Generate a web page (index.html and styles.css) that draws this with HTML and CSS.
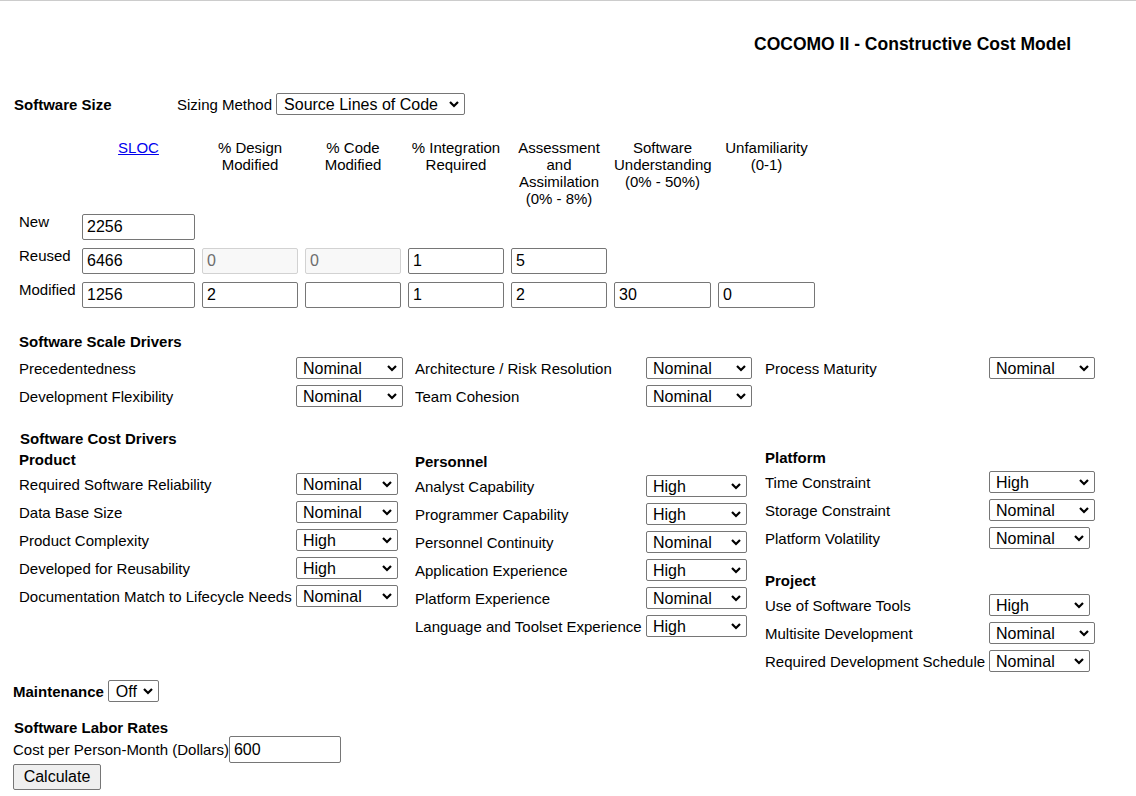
FILE: index.html
```html
<!DOCTYPE html>
<html>
<head>
<meta charset="utf-8">
<title>COCOMO II - Constructive Cost Model</title>
<link rel="stylesheet" href="styles.css">
</head>
<body>
<div class="page">
  <div class="title">COCOMO II - Constructive Cost Model</div>

  <div class="size-row">
    <span class="b size-label">Software Size</span>
    <span class="sizing">Sizing Method</span>
    <span class="sw"><select class="sel sel-method"><option>Source Lines of Code</option><option>Function Points</option></select><svg class="chev" viewBox="0 0 10 6"><path d="M1 1 L5 5 L9 1"/></svg></span>
  </div>

  <div class="size-grid">
    <div></div>
    <div class="hdr"><a href="#">SLOC</a></div>
    <div class="hdr">% Design<br>Modified</div>
    <div class="hdr">% Code<br>Modified</div>
    <div class="hdr">% Integration<br>Required</div>
    <div class="hdr">Assessment<br>and<br>Assimilation<br>(0% - 8%)</div>
    <div class="hdr">Software<br>Understanding<br>(0% - 50%)</div>
    <div class="hdr">Unfamiliarity<br>(0-1)</div>

    <div class="rowlabel">New</div>
    <input class="inp" type="text" value="2256">
    <div></div><div></div><div></div><div></div><div></div><div></div>

    <div class="rowlabel">Reused</div>
    <input class="inp" type="text" value="6466">
    <input class="inp" type="text" value="0" disabled>
    <input class="inp" type="text" value="0" disabled>
    <input class="inp" type="text" value="1">
    <input class="inp" type="text" value="5">
    <div></div><div></div>

    <div class="rowlabel">Modified</div>
    <input class="inp" type="text" value="1256">
    <input class="inp" type="text" value="2">
    <input class="inp" type="text" value="">
    <input class="inp" type="text" value="1">
    <input class="inp" type="text" value="2">
    <input class="inp" type="text" value="30">
    <input class="inp" type="text" value="0">
  </div>

  <div class="b section-head scale-head">Software Scale Drivers</div>
  <div class="drivers">
    <div class="col col1">
      <div class="drow"><span class="dl">Precedentedness</span><span class="sw"><select class="sel w107"><option>Nominal</option></select><svg class="chev" viewBox="0 0 10 6"><path d="M1 1 L5 5 L9 1"/></svg></span></div>
      <div class="drow"><span class="dl">Development Flexibility</span><span class="sw"><select class="sel w107"><option>Nominal</option></select><svg class="chev" viewBox="0 0 10 6"><path d="M1 1 L5 5 L9 1"/></svg></span></div>
    </div>
    <div class="col col2">
      <div class="drow"><span class="dl">Architecture / Risk Resolution</span><span class="sw"><select class="sel w106"><option>Nominal</option></select><svg class="chev" viewBox="0 0 10 6"><path d="M1 1 L5 5 L9 1"/></svg></span></div>
      <div class="drow"><span class="dl">Team Cohesion</span><span class="sw"><select class="sel w106"><option>Nominal</option></select><svg class="chev" viewBox="0 0 10 6"><path d="M1 1 L5 5 L9 1"/></svg></span></div>
    </div>
    <div class="col col3">
      <div class="drow"><span class="dl">Process Maturity</span><span class="sw"><select class="sel w106"><option>Nominal</option></select><svg class="chev" viewBox="0 0 10 6"><path d="M1 1 L5 5 L9 1"/></svg></span></div>
    </div>
  </div>

  <div class="b section-head cost-head">Software Cost Drivers</div>
  <div class="drivers">
    <div class="col col1">
      <div class="b grp grp-product">Product</div>
      <div class="drow"><span class="dl">Required Software Reliability</span><span class="sw"><select class="sel w102"><option>Nominal</option></select><svg class="chev" viewBox="0 0 10 6"><path d="M1 1 L5 5 L9 1"/></svg></span></div>
      <div class="drow"><span class="dl">Data Base Size</span><span class="sw"><select class="sel w102"><option>Nominal</option></select><svg class="chev" viewBox="0 0 10 6"><path d="M1 1 L5 5 L9 1"/></svg></span></div>
      <div class="drow"><span class="dl">Product Complexity</span><span class="sw"><select class="sel w102"><option>High</option></select><svg class="chev" viewBox="0 0 10 6"><path d="M1 1 L5 5 L9 1"/></svg></span></div>
      <div class="drow"><span class="dl">Developed for Reusability</span><span class="sw"><select class="sel w102"><option>High</option></select><svg class="chev" viewBox="0 0 10 6"><path d="M1 1 L5 5 L9 1"/></svg></span></div>
      <div class="drow"><span class="dl">Documentation Match to Lifecycle Needs</span><span class="sw"><select class="sel w102"><option>Nominal</option></select><svg class="chev" viewBox="0 0 10 6"><path d="M1 1 L5 5 L9 1"/></svg></span></div>
    </div>
    <div class="col col2">
      <div class="b grp grp-personnel">Personnel</div>
      <div class="drow"><span class="dl">Analyst Capability</span><span class="sw"><select class="sel w101"><option>High</option></select><svg class="chev" viewBox="0 0 10 6"><path d="M1 1 L5 5 L9 1"/></svg></span></div>
      <div class="drow"><span class="dl">Programmer Capability</span><span class="sw"><select class="sel w101"><option>High</option></select><svg class="chev" viewBox="0 0 10 6"><path d="M1 1 L5 5 L9 1"/></svg></span></div>
      <div class="drow"><span class="dl">Personnel Continuity</span><span class="sw"><select class="sel w101"><option>Nominal</option></select><svg class="chev" viewBox="0 0 10 6"><path d="M1 1 L5 5 L9 1"/></svg></span></div>
      <div class="drow"><span class="dl">Application Experience</span><span class="sw"><select class="sel w101"><option>High</option></select><svg class="chev" viewBox="0 0 10 6"><path d="M1 1 L5 5 L9 1"/></svg></span></div>
      <div class="drow"><span class="dl">Platform Experience</span><span class="sw"><select class="sel w101"><option>Nominal</option></select><svg class="chev" viewBox="0 0 10 6"><path d="M1 1 L5 5 L9 1"/></svg></span></div>
      <div class="drow"><span class="dl">Language and Toolset Experience</span><span class="sw"><select class="sel w101"><option>High</option></select><svg class="chev" viewBox="0 0 10 6"><path d="M1 1 L5 5 L9 1"/></svg></span></div>
    </div>
    <div class="col col3">
      <div class="b grp grp-platform">Platform</div>
      <div class="drow"><span class="dl">Time Constraint</span><span class="sw"><select class="sel w106"><option>High</option></select><svg class="chev" viewBox="0 0 10 6"><path d="M1 1 L5 5 L9 1"/></svg></span></div>
      <div class="drow"><span class="dl">Storage Constraint</span><span class="sw"><select class="sel w106"><option>Nominal</option></select><svg class="chev" viewBox="0 0 10 6"><path d="M1 1 L5 5 L9 1"/></svg></span></div>
      <div class="drow"><span class="dl">Platform Volatility</span><span class="sw"><select class="sel w101"><option>Nominal</option></select><svg class="chev" viewBox="0 0 10 6"><path d="M1 1 L5 5 L9 1"/></svg></span></div>
      <div class="b grp grp-project">Project</div>
      <div class="drow"><span class="dl">Use of Software Tools</span><span class="sw"><select class="sel w101"><option>High</option></select><svg class="chev" viewBox="0 0 10 6"><path d="M1 1 L5 5 L9 1"/></svg></span></div>
      <div class="drow"><span class="dl">Multisite Development</span><span class="sw"><select class="sel w106"><option>Nominal</option></select><svg class="chev" viewBox="0 0 10 6"><path d="M1 1 L5 5 L9 1"/></svg></span></div>
      <div class="drow"><span class="dl">Required Development Schedule</span><span class="sw"><select class="sel w101"><option>Nominal</option></select><svg class="chev" viewBox="0 0 10 6"><path d="M1 1 L5 5 L9 1"/></svg></span></div>
    </div>
  </div>

  <div class="maint-row">
    <span class="b">Maintenance</span>
    <span class="sw"><select class="sel w51"><option>Off</option><option>On</option></select><svg class="chev" viewBox="0 0 10 6"><path d="M1 1 L5 5 L9 1"/></svg></span>
  </div>

  <div class="b labor-head">Software Labor Rates</div>
  <div class="cost-row">
    <span>Cost per Person-Month (Dollars)</span><input class="inp inp-cost" type="text" value="600">
  </div>
  <button class="calc" type="button">Calculate</button>
</div>
</body>
</html>
```
FILE: styles.css
```css
html, body {
  margin: 0;
  padding: 0;
  background: #fff;
}
body {
  border-top: 1px solid #cccccc;
  font-family: "Liberation Sans", Arial, sans-serif;
  font-size: 15px;
  line-height: 17px;
  color: #000;
}
.page {
  padding-bottom: 10px;
}
.b {
  font-weight: bold;
}
.title {
  margin-top: 33px;
  height: 20px;
  line-height: 20px;
  font-size: 17.5px;
  font-weight: bold;
  text-align: right;
  padding-right: 65px;
}
.size-row {
  margin-top: 39px;
  display: flex;
  align-items: center;
  height: 22px;
  padding-left: 14px;
}
.size-label {
  width: 163px;
}
.sizing {
  margin-right: 4px;
}
.sw {
  position: relative;
  display: inline-block;
  flex: none;
  height: 22px;
}
.chev {
  position: absolute;
  right: 6px;
  top: 8px;
  width: 10px;
  height: 6px;
  pointer-events: none;
  overflow: visible;
}
.chev path {
  fill: none;
  stroke: #000;
  stroke-width: 2.2;
}
.sel {
  -webkit-appearance: none;
  appearance: none;
  display: block;
  font-family: "Liberation Sans", Arial, sans-serif;
  font-size: 16px;
  line-height: 19px;
  height: 22px;
  box-sizing: border-box;
  border: 1px solid #767676;
  border-radius: 2px;
  background-color: #fff;
  color: #000;
  padding: 1px 20px 0 6px;
  margin: 0;
}
.sel-method { width: 189px; padding-left: 7px; }
.w107 { width: 107px; }
.w106 { width: 106px; }
.w102 { width: 102px; }
.w101 { width: 101px; }
.w51 { width: 51px; padding-left: 7px; }

.size-grid {
  margin-top: 24px;
  display: grid;
  grid-template-columns: 61px 113px 96px 96px 96px 96px 97px 97px;
  grid-template-rows: 67px 26px 26px 26px;
  column-gap: 7px;
  row-gap: 8px;
  padding-left: 14px;
}
.hdr {
  text-align: center;
  line-height: 17px;
  white-space: nowrap;
}
.hdr a {
  color: #0000ee;
  text-decoration: underline;
}
.rowlabel {
  padding-left: 5px;
  align-self: start;
  margin-top: -1px;
}
.inp {
  font-family: "Liberation Sans", Arial, sans-serif;
  font-size: 16px;
  height: 26px;
  width: 100%;
  box-sizing: border-box;
  border: 1px solid #767676;
  border-radius: 2px;
  padding: 0 4px;
  margin: 0;
  color: #000;
  background: #fff;
}
.inp:disabled {
  background: #f8f8f8;
  border-color: #d2d2d2;
  color: #6d6d6d;
}
.section-head {
  padding-left: 19px;
}
.scale-head {
  margin-top: 25px;
  margin-bottom: 7px;
}
.cost-head {
  margin-top: 23px;
  padding-left: 20px;
}
.drivers {
  display: grid;
  grid-template-columns: 396px 350px auto;
  padding-left: 19px;
  align-items: start;
}
.col {
  display: flex;
  flex-direction: column;
  gap: 6px;
}
.drow {
  display: flex;
  align-items: center;
  height: 22px;
}
.dl {
  white-space: nowrap;
  flex: none;
}
.col1 .dl { width: 277px; }
.col2 .dl { width: 231px; }
.col3 .dl { width: 224px; }
.grp {
  margin-bottom: -1px;
}
.grp-product { margin-top: 4px; }
.grp-personnel { margin-top: 6px; }
.grp-platform { margin-top: 2px; }
.grp-project { margin-top: 17px; }

.maint-row {
  margin-top: 8px;
  padding-left: 13px;
  display: flex;
  align-items: center;
  height: 22px;
  gap: 4px;
}
.labor-head {
  margin-top: 17px;
  padding-left: 14px;
}
.cost-row {
  display: flex;
  align-items: center;
  padding-left: 13px;
  height: 27px;
}
.inp-cost {
  width: 112px;
  height: 27px;
}
.calc {
  display: block;
  margin: 1px 0 0 13px;
  width: 88px;
  height: 26px;
  padding: 0;
  font-family: "Liberation Sans", Arial, sans-serif;
  font-size: 16px;
  background: #efefef;
  border: 1px solid #767676;
  border-radius: 2px;
  color: #000;
}
```
